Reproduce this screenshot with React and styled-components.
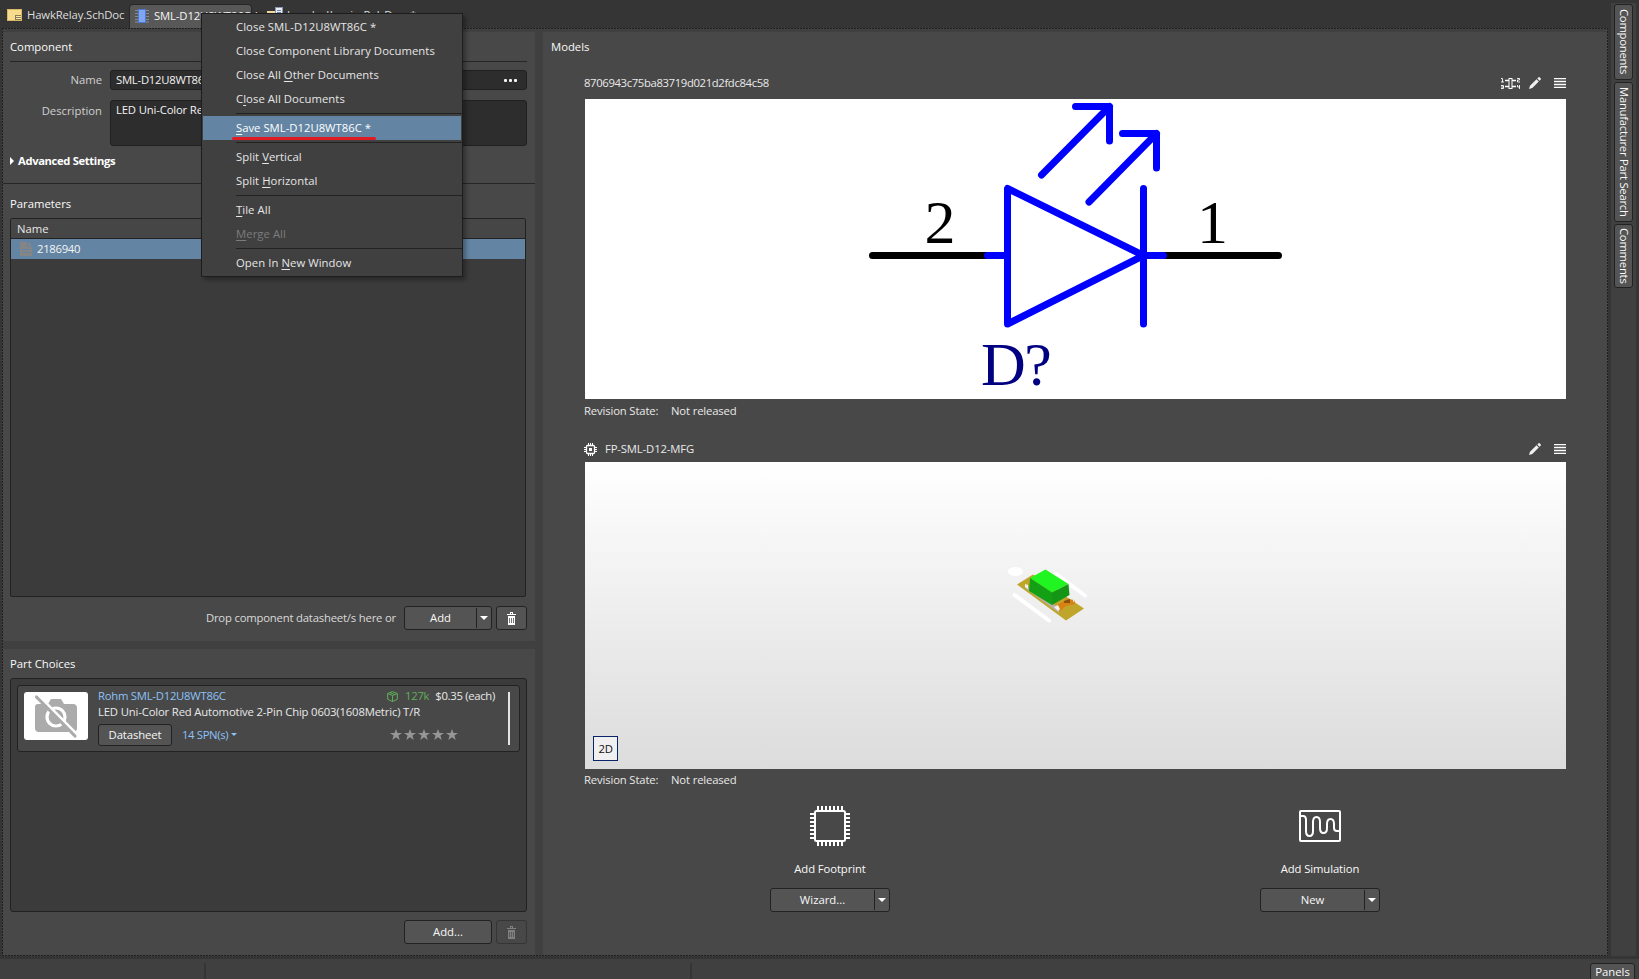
import React from "react";
import styled, { createGlobalStyle, css } from "styled-components";

const Global = createGlobalStyle`
  * { box-sizing: border-box; }
  html, body { margin: 0; padding: 0; background: #353535; overflow: hidden; }
  body { font-family: "Open Sans", "Noto Sans", sans-serif; font-size: 11.3px; line-height: 16px; color: #e8e8e8; }
  svg { flex: none; }
`;

const Window = styled.div`
  width: 1639px; height: 979px; display: flex; flex-direction: column; background: #353535; overflow: hidden;
  position: relative; white-space: nowrap;
`;
const Upper = styled.div`display: flex; height: 956px;`;
const Main = styled.div`width: 1608px; display: flex; flex-direction: column;`;
const Text = styled.span`letter-spacing: ${p => p.$ls}px;`;

/* document tabs */
const TabBar = styled.div`height: 28px; display: flex; align-items: flex-end; background: #353535;`;
const Tab = styled.div`
  height: 24px; display: flex; align-items: center; gap: ${p => p.$gap || 5}px; padding-left: ${p => p.$pad}px;
  width: ${p => p.$w}px; padding-bottom: 2px; color: #dedede; letter-spacing: ${p => p.$ls || -0.13}px;
  ${p => p.$active && css`background: #585858; border: 1px solid #262626; border-bottom: 0; border-radius: 4px 4px 0 0; color: #f4f4f4; padding-bottom: 2px;`}
`;

/* dashed work area */
const dashH = "repeating-linear-gradient(90deg,#1f1f1f 0 2px,#484848 2px 3px)";
const dashV = "repeating-linear-gradient(180deg,#1f1f1f 0 2px,#484848 2px 3px)";
const Workspace = styled.div`
  flex: 1; margin-left: 2px; padding: 4px 1px 1px 1px; display: flex; gap: 8px; background:
    ${dashH} 0 0 / 100% 1px no-repeat, ${dashH} 0 100% / 100% 1px no-repeat,
    ${dashV} 0 0 / 1px 100% no-repeat, ${dashV} 100% 0 / 1px 100% no-repeat, #404040;
`;
const Left = styled.div`width: 532px; flex: none; display: flex; flex-direction: column; gap: 8px;`;
const Panel = styled.section`background: #484848; display: flex; flex-direction: column; height: ${p => p.$h}px; padding: 0 8px 0 7px;`;
const Title = styled.div`
  height: ${p => p.$h || 28}px; padding-top: ${p => p.$t || 7}px; color: #fafafa;
`;
const Rule = styled.div`height: 1px; background: #262626; margin: ${p => p.$m || "0"};`;
const Field = styled.div`display: flex; height: ${p => p.$h}px; margin-bottom: ${p => p.$mb || 0}px;`;
const Label = styled.div`width: 92px; text-align: right; padding-top: ${p => p.$t}px; color: #d0d0d0; margin-right: 8px;`;
const Input = styled.div`
  flex: 1; background: #2d2d2d; border: 1px solid #202020; border-radius: 3px; padding: ${p => p.$t}px 9px 0 5px;
  display: flex; justify-content: space-between; color: #f2f2f2; letter-spacing: ${p => p.$ls}px;
`;
const Dots = styled.div`
  display: flex; gap: 2px; padding-top: 7px;
  i { width: 3px; height: 3px; border-radius: 1px; background: #f4f4f4; }
`;
const Advanced = styled.div`
  display: flex; align-items: center; gap: 4px; height: 36px; font-weight: 700; color: #fff; padding-bottom: 6px;
  font-size: 11.2px; letter-spacing: -0.33px;
`;
const Table = styled.div`
  height: 379px; width: 516px; border: 1px solid #222; border-radius: 2px; background: #3b3b3b;
`;
const HeadRow = styled.div`height: 20px; background: #464646; border-bottom: 1px solid #222; padding: 2px 6px;`;
const DataRow = styled.div`
  height: 20px; background: #6384a2; display: flex; align-items: center; gap: 5px; padding-left: 9px; color: #f4f4f4; letter-spacing: -0.3px;
`;
const Actions = styled.div`display: flex; justify-content: flex-end; align-items: center; height: 24px; margin-top: ${p => p.$mt}px; gap: 4px;`;
const Hint = styled.span`margin-right: 4px; letter-spacing: -0.19px; color: #dadada;`;
const Button = styled.div`
  width: ${p => p.$w}px; height: ${p => p.$h || 24}px; border: 1px solid ${p => (p.$off ? "#353535" : "#222")}; border-radius: 3px;
  background: ${p => (p.$off ? "#484848" : "#545454")}; color: #f8f8f8; display: flex; align-items: center; justify-content: center;
  letter-spacing: ${p => p.$ls || 0}px;
`;
const SplitText = styled.div`flex: 1; text-align: center;`;
const SplitArrow = styled.div`
  width: 15px; height: 20px; border-left: 1px solid #222; display: flex; align-items: center; justify-content: center; padding-bottom: 1px;
`;

/* part choices */
const List = styled.div`height: 234px; border: 1px solid #222; border-radius: 3px; background: #3b3b3b; padding: 6px;`;
const Card = styled.div`
  height: 67px; border: 1px solid #222; border-radius: 3px; background: #484848; padding: 6px 9px 5px 6px; display: flex;
`;
const Thumb = styled.div`width: 64px; height: 48px; background: #fff; border-radius: 3px; margin-right: 10px;`;
const CardBody = styled.div`flex: 1; display: flex; flex-direction: column; margin-top: -4px;`;
const CardLine = styled.div`display: flex; flex: none; height: ${p => p.$h || 16}px; align-items: center; justify-content: space-between;`;
const Group = styled.div`display: flex; align-items: center; gap: ${p => p.$gap}px; padding-right: ${p => p.$pr || 0}px; color: ${p => p.$c || "inherit"};`;
const ScrollMark = styled.div`width: 2px; height: 53px; background: #e4e4e4;`;

/* models */
const Models = styled.section`flex: 1; min-width: 0; background: #484848; padding: 0 0 0 42px; display: flex; flex-direction: column;`;
const ModelsTitle = styled.div`margin: 7px 0 0 -34px; height: 20px; color: #fafafa;`;
const ModelHead = styled.div`
  display: flex; justify-content: space-between; align-items: center; height: 16px; margin-top: ${p => p.$mt}px; margin-left: -1px; width: 982px;
`;
const Preview = styled.div`
  height: ${p => p.$h}px; width: 981px; margin-top: ${p => p.$mt}px; background: ${p => p.$bg}; display: flex; position: relative;
`;
const Model3d = styled.svg`position: absolute; left: 420px; top: 100px;`;
const ViewButton = styled.div`
  position: absolute; left: 8px; top: 274px; width: 25px; height: 25px; border: 1px solid #0a246a; background: #f0f0f0;
  color: #111; text-align: center; line-height: 24px; letter-spacing: -0.3px;
`;
const Revision = styled.div`
  display: flex; height: 16px; margin: ${p => p.$mt}px 0 0 -1px; letter-spacing: -0.15px;
  span:first-child { width: 87px; }
`;
const AddRow = styled.div`display: grid; grid-template-columns: 490px 490px; margin-top: 18px;`;
const AddCell = styled.div`display: flex; flex-direction: column; align-items: center; color: #fafafa;`;
const AddLabel = styled.div`margin: 15px 0 11px; letter-spacing: -0.1px;`;

/* right dock and status bar */
const Dock = styled.div`
  width: 25px; margin: 3px 0 0 3px; background: #404040; display: flex; flex-direction: column; align-items: center; padding-top: 1px; gap: 2px;
`;
const DockTab = styled.div`
  width: 19px; height: ${p => p.$h}px; border: 1px solid #222; border-radius: 3px; background: #545454; writing-mode: vertical-rl;
  display: flex; align-items: center; justify-content: center; color: #fafafa; line-height: 15px; padding-left: 2px; letter-spacing: -0.25px;
`;
const Status = styled.div`
  margin-top: 3px; height: 20px; background: #404040; display: flex; padding: 4px 4px 0 0;
`;
const StatusCell = styled.div`width: ${p => p.$w}px; height: 16px; border-right: 2px solid #353535;`;
const PanelsButton = styled.div`
  width: 45px; height: 20px; margin-left: auto; border: 1px solid #222; border-radius: 3px; background: #545454; text-align: center; color: #fafafa;
`;

/* context menu */
const Menu = styled.div`
  position: absolute; left: 201px; top: 13px; width: 262px; height: 264px; background: #404040; border: 1px solid #1d1d1d;
  box-shadow: 3px 3px 4px rgba(0,0,0,.3); color: #e6e6e6; padding: 1px 1px; letter-spacing: 0.06px;
`;
const Item = styled.div`
  height: 24px; padding: 4px 0 0 33px; line-height: 15px; color: ${p => (p.$off ? "#7c7c7c" : "inherit")};
  ${p => p.$active && css`background: #6384a2; color: #fff; position: relative; letter-spacing: 0;`}
  u { text-underline-offset: 2px; text-decoration-thickness: 1px; text-decoration-skip-ink: none; }
`;
const Sep = styled.div`height: 1px; background: #222; margin: 2px -1px 2px 33px;`;
const RedLine = styled.div`position: absolute; left: 29px; top: 21px; width: 144px; height: 3px; border-radius: 2px; background: #e11b22;`;

const Down = ({ c = "#fff", w = 8 }) => (
  <svg width={w} height={w / 2} viewBox="0 0 8 4"><path d="M0 0h8L4 4z" fill={c} /></svg>
);
const Trash = ({ c = "#fff" }) => (
  <svg width="9" height="13" viewBox="0 0 9 13">
    <path d="M3 0h3v2h3v1H0V2h3zM4 1v1h1V1zM1 4h7v9H1z" fill={c} fillRule="evenodd" />
    <path d="M2.500 6v5M4.500 6v5M6.500 6v5" stroke="#505050" strokeWidth=".8" />
  </svg>
);
const SchIcon = () => (
  <svg width="15" height="12" viewBox="0 0 15 12">
    <rect x=".5" y=".5" width="14" height="11" fill="#f6dc8c" stroke="#d9b765" />
    <path d="M8 6h6v5H8z" fill="#8b7c4e" /><path d="M9 7.500h5M9 9.500h5" stroke="#f8eab5" />
  </svg>
);
const ChipIcon = () => (
  <svg width="14" height="14" viewBox="0 0 14 14">
    <path d="M0 1.500h14M0 4.500h14M0 7.500h14M0 10.500h14M0 13h14" stroke="#858b94" />
    <rect x="3.500" y=".5" width="7" height="13" fill="#7fa5f3" stroke="#4b78d2" />
  </svg>
);
const PcbIcon = () => (
  <svg width="16" height="16" viewBox="0 0 16 16">
    <rect x="0" y="4" width="10" height="9" fill="#f1dca0" />
    <rect x="8.500" y=".5" width="7" height="12" fill="#e9eef7" stroke="#8a97ad" /><path d="M10 3.500h4M10 5.500h4" stroke="#7089b3" />
  </svg>
);
const DocIcon = () => (
  <svg width="12" height="14" viewBox="0 0 12 14">
    <path d="M0 0h7v5h5v9H0z" fill="#858585" /><path d="M8 0l4 4H8z" fill="#858585" /><path d="M2 7.500h8M2 10.500h8" stroke="#6384a2" />
  </svg>
);
const NoCamera = () => (
  <svg width="64" height="48" viewBox="0 0 64 48">
    <path d="M14 12h10l3-5h10l3 5h9q4 0 4 4v20q0 4-4 4H15q-4 0-4-4V15q0-3 3-3z" fill="#ababab" />
    <circle cx="32" cy="25" r="9" fill="none" stroke="#fff" strokeWidth="3.200" />
    <path d="M14.500 3.500L53 42.500" stroke="#fff" strokeWidth="3" />
    <path d="M12.500 5l38.500 39" stroke="#ababab" strokeWidth="3.200" strokeLinecap="round" />
  </svg>
);
const Cube = () => (
  <svg width="11" height="11" viewBox="0 0 11 11" fill="none" stroke="#5fae57">
    <path d="M5.500.6L10.300 2.500v5.800L5.500 10.500.7 8.300V2.500zM.7 2.500l4.800 2 4.800-2M5.500 4.500v6M3 1.600l4.800 2" />
  </svg>
);
const Star = () => (
  <svg width="12" height="11" viewBox="0 0 12 11"><path d="M6 0l1.500 4H12L8.400 6.600 9.700 11 6 8.300 2.300 11l1.300-4.400L0 4h4.500z" fill="#969696" /></svg>
);
const PinsIcon = () => (
  <svg width="19" height="11" viewBox="0 0 19 11" fill="none" stroke="#fff">
    <path d="M0 .5h1.500V4M0 4h3M0 7.500h2.500v3H0M0 9h2.500M16 .5h2.500V2H16.500v2H19M16.500 7v2h2.500M18.500 7v4" strokeWidth=".9" />
    <path d="M4 2.500h4M11 2.500h4M4 8.500h4M11 8.500h4" strokeWidth="1.600" /><rect x="8" y=".5" width="3" height="10" />
  </svg>
);
const Pencil = () => (
  <svg width="12" height="12" viewBox="0 0 12 12" fill="#f0f0f0"><path d="M0 12l1-3.300L7.500 2.200 9.800 4.500 3.300 11zM8.300 1.500L9.600.2q.5-.4 1 0l1.200 1.200q.4.5 0 1L10.500 3.700z" /></svg>
);
const Lines = () => (
  <svg width="12" height="10" viewBox="0 0 12 10"><path d="M0 .5h12M0 3.500h12M0 6.500h12M0 9.500h12" stroke="#fff" strokeWidth="1.300" /></svg>
);
const SmallChip = () => (
  <svg width="13" height="13" viewBox="0 0 13 13" fill="none" stroke="#fff">
    <path d="M4.500 0v2M6.500 0v2M8.500 0v2M4.500 11v2M6.500 11v2M8.500 11v2M0 4.500h2M0 6.500h2M0 8.500h2M11 4.500h2M11 6.500h2M11 8.500h2" />
    <rect x="2.500" y="2.500" width="8" height="8" rx="1" strokeWidth="1.300" /><rect x="5" y="5" width="3" height="3" fill="#fff" stroke="none" />
  </svg>
);
const pins = [0, 1, 2, 3, 4, 5, 6].map(i => 8 + i * 4);
const Footprint = () => (
  <svg width="40" height="40" viewBox="0 0 40 40" fill="none" stroke="#fff" strokeWidth="2">
    <rect x="5" y="5" width="30" height="30" rx="1.500" />
    {pins.map(p => <path key={p} d={`M${p} 0v4M${p} 36v4M0 ${p}h4M36 ${p}h4`} />)}
  </svg>
);
const Simulation = () => (
  <svg width="42" height="40" viewBox="0 0 42 40" fill="none" stroke="#fff" strokeWidth="2">
    <rect x="1" y="5" width="40" height="30" rx="1" />
    <path d="M1 10h3q3 0 3 4v11q0 5 3.500 5t3.500-5V16q0-5 3.500-5t3.500 5v6q0 5 3.500 5t3.500-5v-4q0-5 3.500-5t3.500 5v4q0 3 3 3h2" />
  </svg>
);
const Diode = () => (
  <svg width="981" height="300" viewBox="585 99 981 300" fill="none" strokeWidth="7" strokeLinecap="round" strokeLinejoin="round">
    <path d="M872.500 255.500H990M1160 255.500H1278.500" stroke="#000" />
    <path d="M987.500 255.500H1007.500M1143.500 255.500H1163.500M1007.500 188.500V324L1143.500 255.500zM1143.500 188.500V324M1041.500 175L1109.500 106.500M1075.500 106.500H1109.500V141M1089 202L1156.500 133.500M1122.500 133.500H1156.500V168" stroke="#00f" />
    <g fontFamily="Liberation Serif, serif" fontSize="62">
      <text x="924.500" y="243" fill="#000">2</text><text x="1197" y="243" fill="#000">1</text>
      <text x="981" y="385" fill="#000080" letterSpacing="-1.5">D?</text>
    </g>
  </svg>
);
const LedBody = () => (
  <Model3d width="90" height="70" viewBox="1005 562 90 70">
    <ellipse cx="1015.500" cy="571.500" rx="7.500" ry="4.500" fill="#fff" />
    <path d="M1014.500 595L1049 620.500M1056 574L1085 595.500" stroke="#fff" strokeWidth="4" strokeLinecap="round" />
    <path d="M1017 584.500L1033 574.500 1084 608.500 1066 620.500z" fill="#bfa62b" />
    <path d="M1025 585L1059 608V613L1025 588z" fill="#b5b0aa" />
    <path d="M1057 605l10-6 8 1v4l-9 2-6 5z" fill="#d98214" /><path d="M1064 601l6-2v4h-6z" fill="#8a5208" />
    <path d="M1025 584l3 1v4l-3-2zM1054 607l4-2 2 4-2 2zM1073 597l2 4-2 1z" fill="#f5f1ea" />
    <path d="M1030 578L1045.500 569.500 1068.500 584 1052 592.500z" fill="#21f521" />
    <path d="M1030 578L1052 592.500V605L1029 591z" fill="#14a014" /><path d="M1052 592.500L1068.500 584 1069.500 595 1052 605z" fill="#159515" />
  </Model3d>
);

export default function App() {
  return (
    <Window>
      <Global />
      <Upper>
        <Main>
          <TabBar>
            <Tab $w={129} $pad={7}><SchIcon />HawkRelay.SchDoc</Tab>
            <Tab $w={123} $pad={5} $active><ChipIcon />SML-D12U8WT86C *</Tab>
            <Tab $w={170} $pad={15} $gap={4} $ls={0.6}><PcbIcon />LoadedLogic.PcbDoc *</Tab>
          </TabBar>
          <Workspace>
            <Left>
              <Panel $h={609}>
                <Title $h={29}>Component</Title>
                <Rule $m="0 0 8px" />
                <Field $h={20} $mb={10}>
                  <Label $t={2}>Name</Label>
                  <Input $t={1} $ls={-0.25}>SML-D12U8WT86C<Dots><i /><i /><i /></Dots></Input>
                </Field>
                <Field $h={46}>
                  <Label $t={3}>Description</Label>
                  <Input $t={1} $ls={-0.16}>LED Uni-Color Red Automotive 2-Pin Chip 0603(1608Metric) T/R</Input>
                </Field>
                <Advanced><svg width="4" height="8" viewBox="0 0 4 8"><path d="M0 0l4 4-4 4z" fill="#fff" /></svg>Advanced Settings</Advanced>
                <Rule $m="1px -8px 0 -7px" />
                <Title $h={34} $t={12}>Parameters</Title>
                <Table>
                  <HeadRow>Name</HeadRow>
                  <DataRow><DocIcon />2186940</DataRow>
                </Table>
                <Actions $mt={9}>
                  <Hint>Drop component datasheet/s here or</Hint>
                  <Button $w={88}><SplitText>Add</SplitText><SplitArrow><Down /></SplitArrow></Button>
                  <Button $w={31}><Trash /></Button>
                </Actions>
              </Panel>
              <Panel $h={306}>
                <Title $h={29}>Part Choices</Title>
                <List>
                  <Card>
                    <Thumb><NoCamera /></Thumb>
                    <CardBody>
                      <CardLine>
                        <Group $c="#8cc2f7"><Text $ls={-0.25}>Rohm SML-D12U8WT86C</Text></Group>
                        <Group $gap={6} $pr={13}>
                          <Group $gap={7} $c="#5fae57"><Cube /><Text $ls={-0.3}>127k</Text></Group>
                          <Text $ls={-0.3}>$0.35 (each)</Text>
                        </Group>
                      </CardLine>
                      <CardLine><Text $ls={-0.16}>LED Uni-Color Red Automotive 2-Pin Chip 0603(1608Metric) T/R</Text></CardLine>
                      <CardLine $h={29}>
                        <Group $gap={10}>
                          <Button $w={74} $h={22} $ls={-0.1}>Datasheet</Button>
                          <Group $gap={3} $c="#8cc2f7"><Text $ls={-0.35}>14 SPN(s)</Text><Down c="#8cc2f7" w={6} /></Group>
                        </Group>
                        <Group $gap={2} $pr={50}><Star /><Star /><Star /><Star /><Star /></Group>
                      </CardLine>
                    </CardBody>
                    <ScrollMark />
                  </Card>
                </List>
                <Actions $mt={8}>
                  <Button $w={88}>Add...</Button>
                  <Button $w={31} $off><Trash c="#808080" /></Button>
                </Actions>
              </Panel>
            </Left>
            <Models>
              <ModelsTitle>Models</ModelsTitle>
              <ModelHead $mt={16}>
                <Text $ls={-0.36}>8706943c75ba83719d021d2fdc84c58</Text>
                <Group $gap={9}><PinsIcon /><Group $gap={13}><Pencil /><Lines /></Group></Group>
              </ModelHead>
              <Preview $h={300} $mt={8} $bg="#fff"><Diode /></Preview>
              <Revision $mt={4}><span>Revision State:</span><span>Not released</span></Revision>
              <ModelHead $mt={22}>
                <Group $gap={8}><SmallChip /><Text $ls={-0.15}>FP-SML-D12-MFG</Text></Group>
                <Group $gap={13}><Pencil /><Lines /></Group>
              </ModelHead>
              <Preview $h={307} $mt={5} $bg="linear-gradient(#fff, #dcdcdc)">
                <LedBody />
                <ViewButton>2D</ViewButton>
              </Preview>
              <Revision $mt={3}><span>Revision State:</span><span>Not released</span></Revision>
              <AddRow>
                <AddCell>
                  <Footprint /><AddLabel>Add Footprint</AddLabel>
                  <Button $w={120}><SplitText>Wizard...</SplitText><SplitArrow><Down /></SplitArrow></Button>
                </AddCell>
                <AddCell>
                  <Simulation /><AddLabel>Add Simulation</AddLabel>
                  <Button $w={120}><SplitText>New</SplitText><SplitArrow><Down /></SplitArrow></Button>
                </AddCell>
              </AddRow>
            </Models>
          </Workspace>
        </Main>
        <Dock>
          <DockTab $h={76}>Components</DockTab>
          <DockTab $h={140}>Manufacturer Part Search</DockTab>
          <DockTab $h={64}>Comments</DockTab>
        </Dock>
      </Upper>
      <Status>
        <StatusCell $w={206} /><StatusCell $w={486} />
        <PanelsButton>Panels</PanelsButton>
      </Status>
      <Menu>
        <Item>Close SML-D12U8WT86C *</Item>
        <Item>Close Component Library Documents</Item>
        <Item>Close All <u>O</u>ther Documents</Item>
        <Item>C<u>l</u>ose All Documents</Item>
        <Sep />
        <Item $active><u>S</u>ave SML-D12U8WT86C *<RedLine /></Item>
        <Sep />
        <Item>Split <u>V</u>ertical</Item>
        <Item>Split <u>H</u>orizontal</Item>
        <Sep />
        <Item><u>T</u>ile All</Item>
        <Item $off><u>M</u>erge All</Item>
        <Sep />
        <Item>Open In <u>N</u>ew Window</Item>
      </Menu>
    </Window>
  );
}
